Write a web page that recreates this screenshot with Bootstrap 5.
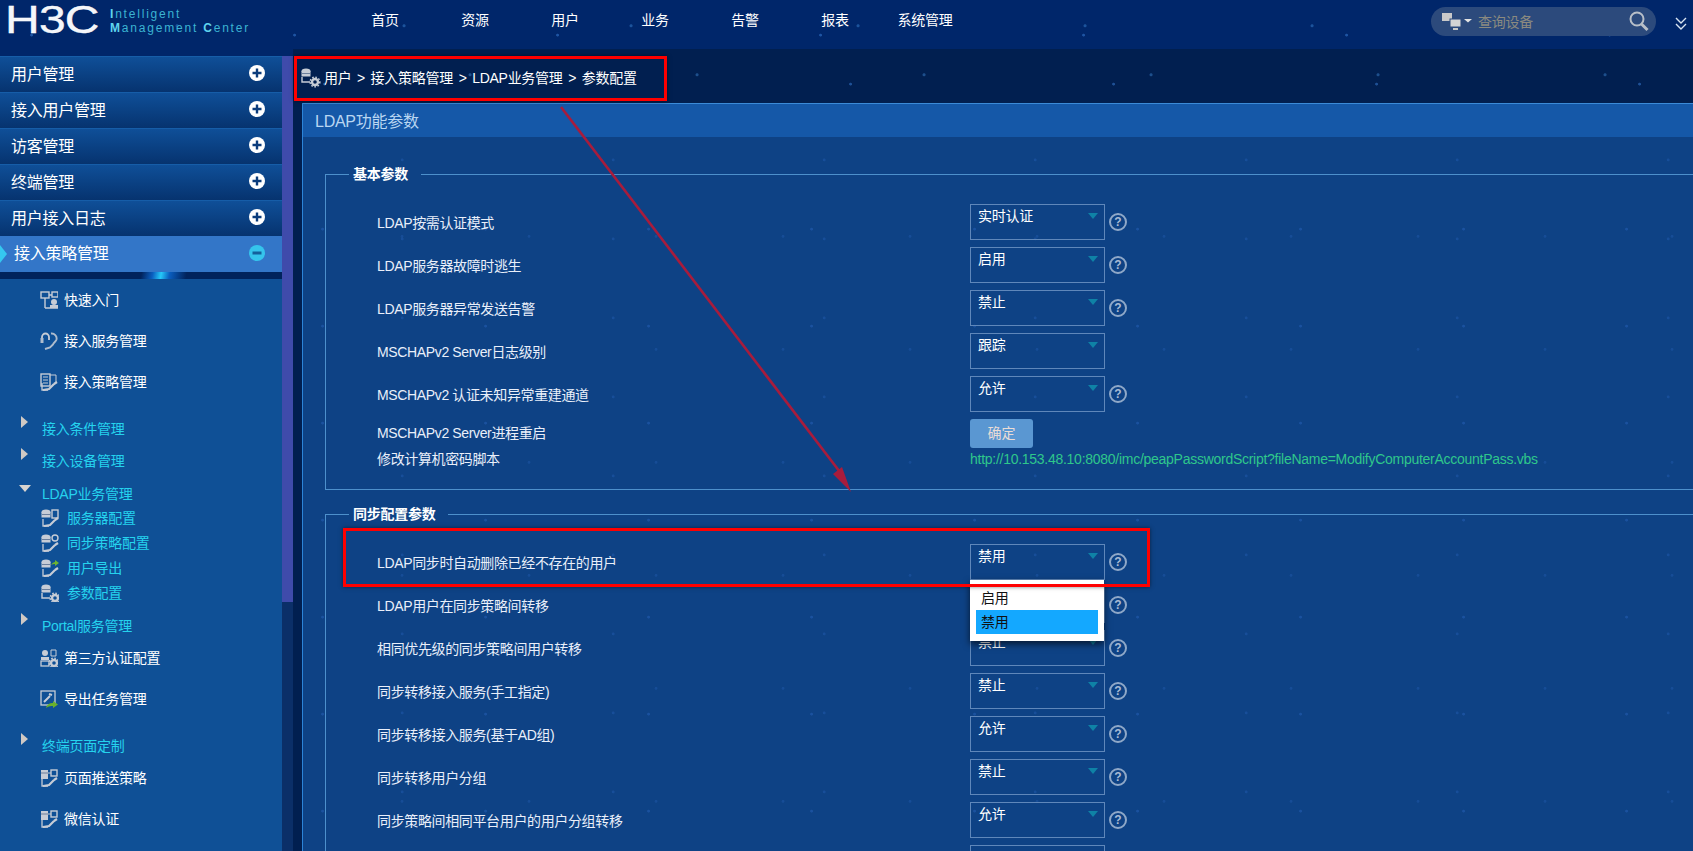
<!DOCTYPE html>
<html lang="zh">
<head>
<meta charset="utf-8">
<title>H3C IMC</title>
<link href="https://cdn.jsdelivr.net/npm/bootstrap@5.3.0/dist/css/bootstrap.min.css" rel="stylesheet">
<style>
html,body{height:851px;overflow:hidden}
body{position:relative;width:1693px;background:#011f50;color:#fff;font-family:"Liberation Sans","Noto Sans CJK SC",sans-serif;font-size:14px;line-height:20px;letter-spacing:-.27px}
.stars{background-image:
 radial-gradient(circle at 12% 30%,rgba(60,130,220,.5) 0 1px,transparent 1.8px),
 radial-gradient(circle at 47% 72%,rgba(60,130,220,.35) 0 1px,transparent 1.8px),
 radial-gradient(circle at 78% 18%,rgba(70,150,230,.4) 0 1px,transparent 2px),
 radial-gradient(circle at 30% 85%,rgba(70,150,230,.3) 0 1px,transparent 1.8px);
 background-size:263px 117px,311px 89px,227px 143px,333px 103px}
.faint{background-image:
 radial-gradient(circle at 12% 30%,rgba(40,100,190,.45) 0 1px,transparent 1.8px),
 radial-gradient(circle at 47% 72%,rgba(40,100,190,.35) 0 1px,transparent 1.8px),
 radial-gradient(circle at 78% 18%,rgba(40,100,190,.3) 0 1px,transparent 1.8px);
 background-size:163px 97px,211px 79px,127px 113px}
.hdr{height:49px;background-color:#00266a}
.brand{width:340px;flex:none}
.h3c{width:102px;padding:7px 0 0 5px;flex:none;height:49px}
.h3c span{display:block;font-size:32px;line-height:27px;font-weight:400;letter-spacing:-.5px;color:#f4f6fa;transform:scale(1.5,1.2);transform-origin:left center;-webkit-text-stroke:.3px #fff}
.imc{margin-left:8px;padding-top:7px;color:#3bb4d2;font-size:12px;line-height:14px;letter-spacing:1.8px;white-space:nowrap}
.imc b{color:#5fd4ee}
.topnav a{display:block;width:90px;text-align:center;color:#fff;text-decoration:none;line-height:40px;font-size:14px}
.searchbox{width:225px;height:29px;margin-top:7px;margin-left:auto;background:#2c4a7c;border-radius:15px;padding:0 7px 0 11px;color:#8b8a80;font-size:14px}
.searchbox span{margin-left:4px}
.more{width:37px;flex:none;padding:12px 0 0 19px}
.leftcol{width:293px;flex:none;height:802px;background-color:#00266a;padding-top:7px}
.leftin{width:282px;height:795px;flex:none;background:#0f5096;overflow:hidden}
.track{width:11px;height:795px;background:#0b2f68;flex:none}
.thumb{height:546px;background:#3f4bab}
.topitem{height:36px;padding-left:11px;font-size:16px;line-height:34px;background:linear-gradient(#0f4f98,#06336f);border-top:1px solid #165da8;color:#fff}
.topitem svg{margin-right:16px;margin-top:-3px}
.topitem.on{background:#3376c8;padding-left:0;border:0;line-height:36px;position:relative}
.notch{width:0;height:0;border-left:7px solid #35c8f0;border-top:9px solid transparent;border-bottom:9px solid transparent;margin-right:7px}
.streak{height:7px;background:linear-gradient(100deg,#01235c 50%,#0a5ec0 54%,#25c8f8 57%,#0a5ec0 60%,#01235c 66%)}
.leaf{height:41px;padding-left:40px;color:#fff;gap:6px}
.grp{height:22px;padding-left:19px;color:#25d3ee}
.grp .txt{margin-left:14px}
.grp.open .txt{margin-left:11px}
.sub{height:25px;padding-left:41px;color:#25d3ee;gap:8px}
.tri{width:0;height:0;border-left:7px solid #cfc9c4;border-top:6px solid transparent;border-bottom:6px solid transparent;margin-left:2px;margin-top:-15px}
.tridn{width:0;height:0;border-top:7px solid #d8d4d0;border-left:6px solid transparent;border-right:6px solid transparent;margin-top:-12px}
.gap16{margin-top:16px}.gap10{margin-top:10px}.gap11{margin-top:11px}
.rightcol{width:1400px;height:802px;overflow:hidden}
.crumb{height:54px;padding:4px 0 0 8px;gap:3px}
.crumb em{font-style:normal;margin:0 2px}
.paneltitle{height:34px;background:#1558a8;border-top:1px solid #3b8bd8;color:#b9d6f2;font-size:16px;line-height:35px;padding-left:12px}
.panel{margin-left:9px;background-color:#0e4285;border-left:1px solid #2c84d8;height:748px}
.panelin{padding:27px 0 0 22px;margin-right:-12px}
.fs{border:1px solid #4d90cc;padding:17px 0 21px;margin:0;min-width:0}
.fs legend{float:none;width:auto;font-size:14px;font-weight:700;line-height:20px;margin:0 0 0 23px;padding:0 13px 0 4px;color:#fff}
.fs+.fs{margin-top:14px}
.fsrow{height:43px;padding-top:3px;padding-left:51px}
.lbl{width:593px;height:36px;flex:none;color:#e9effa;padding-top:2px;letter-spacing:-.36px}
.sel{position:relative;width:135px;height:36px;flex:none;border:1px solid #5f87ba;padding:0 0 0 7px;line-height:22px;color:#fff}
.sel::after{content:"";position:absolute;right:6px;top:8px;border-top:6px solid #0f82a6;border-left:5.5px solid transparent;border-right:5.5px solid transparent}
.qm{width:18px;height:18px;margin:9px 0 0 4px;border:2px solid #8fa8c8;border-radius:50%;color:#a9bbd4;font-size:12px;font-weight:700;line-height:14px;text-align:center;flex:none;letter-spacing:0}
.btnrow{height:34px;padding-top:3px}
.btnrow .lbl{height:27px;padding-top:0}
.okbtn{width:63px;height:29px;padding:0;border:0;border-radius:3px;background:#5a97d2;color:#e9dcd6;font-size:14px;line-height:29px}
.okbtn:hover{background:#5a97d2;color:#e9dcd6}
.lnkrow{height:18px;padding-left:51px}
.lnkrow .lbl{height:18px;padding-top:0}
.lnk{color:#2ec78b;text-decoration:none;white-space:nowrap}
.opts{position:absolute;left:-1px;top:35px;width:134px;height:61px;background:#fff;box-shadow:0 3px 7px rgba(0,0,0,.65);z-index:4;padding:6px;color:#111;list-style:none;margin:0;line-height:24px}
.opts li{height:24px;padding-left:5px}
.opts li.act{background:#14a8ff}
.redbox{position:absolute;border:3px solid #f00;box-shadow:0 0 4px rgba(0,0,0,.5);z-index:6;pointer-events:none}
.rb1{left:294px;top:56px;width:373px;height:45px}
.rb2{left:343px;top:528px;width:807px;height:59px}
.arrow{position:absolute;left:0;top:0;z-index:5;pointer-events:none}
</style>
</head>
<body>
<svg width="0" height="0" class="position-absolute">
<defs>
<g id="stack"><ellipse cx="5" cy="3" rx="4.500" ry="2.500" fill="#c6ccd6"/><rect x="0.500" y="3" width="9" height="5.500" fill="#c6ccd6"/><path d="M1 5.500h8" stroke="#6b7f9c"/></g>
<g id="wrench"><path d="M3 17l6-1 5-5M14 11l3-2" fill="none" stroke="#c6ccd6" stroke-width="2.200"/><path d="M2 10v7h6" fill="none" stroke="#c6ccd6" stroke-width="1.300"/></g>
<g id="gear"><circle cx="14" cy="14" r="3" fill="none" stroke="#c6ccd6" stroke-width="2.400"/><circle cx="14" cy="14" r="4.800" fill="none" stroke="#c6ccd6" stroke-dasharray="1.600 1.600" stroke-width="1.600"/></g>
<g id="i-quick"><rect x="1" y="1" width="8" height="6" fill="none" stroke="#c6ccd6" stroke-width="1.400"/><rect x="12" y="1" width="6" height="5" fill="none" stroke="#c6ccd6" stroke-width="1.400"/><path d="M9 4h3M5 7v10M5 17h13" fill="none" stroke="#c6ccd6" stroke-width="1.400"/><circle cx="14" cy="11" r="3" fill="#c6ccd6"/><rect x="10" y="14" width="8" height="3" fill="#c6ccd6"/></g>
<g id="i-svc"><path d="M2 9V5a3.500 3.500 0 0 1 7 0v3" fill="none" stroke="#c6ccd6" stroke-width="1.800"/><rect x="0.500" y="6" width="3" height="5" fill="#aebccd"/><path d="M11 1.500a5 5 0 0 1 5.500 6c-.7 2.500-3 3-3.500 5l-3 3-5 1.500" fill="none" stroke="#aebccd" stroke-width="1.900"/></g>
<g id="i-pol"><rect x="1" y="1" width="9" height="12" fill="none" stroke="#c6ccd6" stroke-width="1.400"/><path d="M3 4h5M3 7h5M3 10h5M10 2h6v7" fill="none" stroke="#c6ccd6"/><use href="#wrench"/></g>
<g id="i-srv"><use href="#stack"/><rect x="11" y="1" width="6" height="8" fill="none" stroke="#c6ccd6" stroke-width="1.400"/><use href="#wrench"/></g>
<g id="i-syn"><use href="#stack"/><circle cx="14" cy="4" r="3" fill="none" stroke="#c6ccd6" stroke-width="1.400"/><use href="#wrench"/></g>
<g id="i-exp"><use href="#stack"/><path d="M10 6c1-2 3-3 4-3V1l4 3-4 3V5c-1 0-3 0-4 1z" fill="#6fb52f"/><use href="#wrench"/></g>
<g id="i-par"><use href="#stack"/><path d="M1 9v5h8" fill="none" stroke="#c6ccd6" stroke-width="1.400"/><use href="#gear"/></g>
<g id="i-3rd"><circle cx="5" cy="4" r="3" fill="#c6ccd6"/><rect x="1" y="8" width="8" height="3" fill="#c6ccd6"/><rect x="1" y="12" width="8" height="5" fill="none" stroke="#c6ccd6" stroke-width="1.300"/><path d="M11 1h5v6h-5z" fill="none" stroke="#c6ccd6"/><use href="#gear"/></g>
<g id="i-tsk"><rect x="1" y="1" width="14" height="14" fill="none" stroke="#c6ccd6" stroke-width="1.300"/><path d="M4 12l6-6M9 4l3 1" stroke="#c6ccd6" stroke-width="2"/><path d="M6 18c1-4 4-5 7-5v-2l5 3.500-5 3.500v-2c-2 0-4 0-7 2z" fill="#69b02c"/></g>
<g id="i-psh"><rect x="1" y="1" width="7" height="9" fill="#c6ccd6"/><path d="M1 4h7" stroke="#6b7f9c"/><rect x="11" y="1" width="6" height="6" fill="none" stroke="#c6ccd6" stroke-width="1.400"/><path d="M8 4h3" stroke="#c6ccd6"/><use href="#wrench"/></g>
</defs>
</svg>

<header class="hdr stars d-flex">
  <div class="brand d-flex">
    <div class="h3c"><span>H3C</span></div>
    <div class="imc"><b>I</b>ntelligent<br><b>M</b>anagement <b>C</b>enter</div>
  </div>
  <nav class="topnav d-flex">
    <a href="#">首页</a><a href="#">资源</a><a href="#">用户</a><a href="#">业务</a><a href="#">告警</a><a href="#">报表</a><a href="#">系统管理</a>
  </nav>
  <div class="searchbox d-flex align-items-center">
    <svg width="32" height="20" viewBox="0 0 32 20"><rect x="0" y="1" width="10" height="8" fill="#c9c9c9"/><rect x="8" y="7" width="11" height="8" fill="#d4d4d4" stroke="#2c4a7c"/><path d="M11 16h5v2h-5z" fill="#c9c9c9"/><path d="M22 7h8l-4 3.500z" fill="#e4e4e4"/></svg>
    <span>查询设备</span>
    <svg class="ms-auto" width="20" height="21" viewBox="0 0 20 21"><circle cx="8" cy="8" r="6.500" fill="none" stroke="#b8bfc8" stroke-width="2"/><path d="M12.500 13l6 6" stroke="#b8bfc8" stroke-width="3"/></svg>
  </div>
  <div class="more"><svg width="12" height="13" viewBox="0 0 12 13"><path d="M1 1l5 5 5-5M1 7l5 5 5-5" fill="none" stroke="#d8e4f2" stroke-width="1.400"/></svg></div>
</header>

<div class="d-flex">
  <aside class="leftcol stars d-flex">
    <div class="leftin">
      <div class="topitem d-flex align-items-center justify-content-between">用户管理<svg width="18" height="18" viewBox="0 0 18 18"><circle cx="9" cy="9" r="8" fill="#fff"/><path d="M9 4.500v9M4.500 9h9" stroke="#0b3c7c" stroke-width="2.400"/></svg></div>
      <div class="topitem d-flex align-items-center justify-content-between">接入用户管理<svg width="18" height="18" viewBox="0 0 18 18"><circle cx="9" cy="9" r="8" fill="#fff"/><path d="M9 4.500v9M4.500 9h9" stroke="#0b3c7c" stroke-width="2.400"/></svg></div>
      <div class="topitem d-flex align-items-center justify-content-between">访客管理<svg width="18" height="18" viewBox="0 0 18 18"><circle cx="9" cy="9" r="8" fill="#fff"/><path d="M9 4.500v9M4.500 9h9" stroke="#0b3c7c" stroke-width="2.400"/></svg></div>
      <div class="topitem d-flex align-items-center justify-content-between">终端管理<svg width="18" height="18" viewBox="0 0 18 18"><circle cx="9" cy="9" r="8" fill="#fff"/><path d="M9 4.500v9M4.500 9h9" stroke="#0b3c7c" stroke-width="2.400"/></svg></div>
      <div class="topitem d-flex align-items-center justify-content-between">用户接入日志<svg width="18" height="18" viewBox="0 0 18 18"><circle cx="9" cy="9" r="8" fill="#fff"/><path d="M9 4.500v9M4.500 9h9" stroke="#0b3c7c" stroke-width="2.400"/></svg></div>
      <div class="topitem on d-flex align-items-center"><i class="notch"></i>接入策略管理<svg class="ms-auto" width="18" height="18" viewBox="0 0 18 18"><circle cx="9" cy="9" r="8" fill="#35c4ec"/><path d="M4.500 9h9" stroke="#14609c" stroke-width="3"/></svg></div>
      <div class="streak"></div>

      <div class="leaf d-flex align-items-center"><svg width="18" height="18" viewBox="0 0 18 18"><use href="#i-quick"/></svg>快速入门</div>
      <div class="leaf d-flex align-items-center"><svg width="18" height="18" viewBox="0 0 18 18"><use href="#i-svc"/></svg>接入服务管理</div>
      <div class="leaf d-flex align-items-center"><svg width="18" height="18" viewBox="0 0 18 18"><use href="#i-pol"/></svg>接入策略管理</div>

      <div class="grp gap16 d-flex align-items-center"><i class="tri"></i><span class="txt">接入条件管理</span></div>
      <div class="grp gap10 d-flex align-items-center"><i class="tri"></i><span class="txt">接入设备管理</span></div>
      <div class="grp open gap11 d-flex align-items-center"><i class="tridn"></i><span class="txt">LDAP业务管理</span></div>
      <div class="sub d-flex align-items-center"><svg width="18" height="18" viewBox="0 0 18 18"><use href="#i-srv"/></svg>服务器配置</div>
      <div class="sub d-flex align-items-center"><svg width="18" height="18" viewBox="0 0 18 18"><use href="#i-syn"/></svg>同步策略配置</div>
      <div class="sub d-flex align-items-center"><svg width="18" height="18" viewBox="0 0 18 18"><use href="#i-exp"/></svg>用户导出</div>
      <div class="sub d-flex align-items-center"><svg width="18" height="18" viewBox="0 0 18 18"><use href="#i-par"/></svg>参数配置</div>
      <div class="grp gap10 d-flex align-items-center"><i class="tri"></i><span class="txt">Portal服务管理</span></div>
      <div class="leaf d-flex align-items-center"><svg width="18" height="18" viewBox="0 0 18 18"><use href="#i-3rd"/></svg>第三方认证配置</div>
      <div class="leaf d-flex align-items-center"><svg width="18" height="18" viewBox="0 0 18 18"><use href="#i-tsk"/></svg>导出任务管理</div>
      <div class="grp gap16 d-flex align-items-center"><i class="tri"></i><span class="txt">终端页面定制</span></div>
      <div class="leaf d-flex align-items-center"><svg width="18" height="18" viewBox="0 0 18 18"><use href="#i-psh"/></svg>页面推送策略</div>
      <div class="leaf d-flex align-items-center"><svg width="18" height="18" viewBox="0 0 18 18"><use href="#i-psh"/></svg>微信认证</div>
    </div>
    <div class="track stars"><div class="thumb"></div></div>
  </aside>

  <main class="rightcol stars">
    <div class="crumb d-flex align-items-center">
      <svg width="20" height="20" viewBox="0 0 20 20"><use href="#i-par"/></svg>
      <span>用户 <em>&gt;</em> 接入策略管理 <em>&gt;</em> LDAP业务管理 <em>&gt;</em> 参数配置</span>
    </div>
    <section class="panel faint">
      <div class="paneltitle">LDAP功能参数</div>
      <div class="panelin">
        <fieldset class="fs">
          <legend>基本参数</legend>
          <div class="fsrow d-flex"><div class="lbl d-flex align-items-center">LDAP按需认证模式</div><div class="sel">实时认证</div><div class="qm">?</div></div>
          <div class="fsrow d-flex"><div class="lbl d-flex align-items-center">LDAP服务器故障时逃生</div><div class="sel">启用</div><div class="qm">?</div></div>
          <div class="fsrow d-flex"><div class="lbl d-flex align-items-center">LDAP服务器异常发送告警</div><div class="sel">禁止</div><div class="qm">?</div></div>
          <div class="fsrow d-flex"><div class="lbl d-flex align-items-center">MSCHAPv2 Server日志级别</div><div class="sel">跟踪</div></div>
          <div class="fsrow d-flex"><div class="lbl d-flex align-items-center">MSCHAPv2 认证未知异常重建通道</div><div class="sel">允许</div><div class="qm">?</div></div>
          <div class="fsrow btnrow d-flex"><div class="lbl d-flex align-items-center">MSCHAPv2 Server进程重启</div><button type="button" class="btn okbtn">确定</button></div>
          <div class="lnkrow d-flex align-items-center"><div class="lbl d-flex align-items-center">修改计算机密码脚本</div><a class="lnk" href="#">http://10.153.48.10:8080/imc/peapPasswordScript?fileName=ModifyComputerAccountPass.vbs</a></div>
        </fieldset>
        <fieldset class="fs">
          <legend>同步配置参数</legend>
          <div class="fsrow d-flex"><div class="lbl d-flex align-items-center">LDAP同步时自动删除已经不存在的用户</div><div class="sel">禁用
            <ul class="opts"><li>启用</li><li class="act">禁用</li></ul></div><div class="qm">?</div></div>
          <div class="fsrow d-flex"><div class="lbl d-flex align-items-center">LDAP用户在同步策略间转移</div><div class="sel">禁止</div><div class="qm">?</div></div>
          <div class="fsrow d-flex"><div class="lbl d-flex align-items-center">相同优先级的同步策略间用户转移</div><div class="sel">禁止</div><div class="qm">?</div></div>
          <div class="fsrow d-flex"><div class="lbl d-flex align-items-center">同步转移接入服务(手工指定)</div><div class="sel">禁止</div><div class="qm">?</div></div>
          <div class="fsrow d-flex"><div class="lbl d-flex align-items-center">同步转移接入服务(基于AD组)</div><div class="sel">允许</div><div class="qm">?</div></div>
          <div class="fsrow d-flex"><div class="lbl d-flex align-items-center">同步转移用户分组</div><div class="sel">禁止</div><div class="qm">?</div></div>
          <div class="fsrow d-flex"><div class="lbl d-flex align-items-center">同步策略间相同平台用户的用户分组转移</div><div class="sel">允许</div><div class="qm">?</div></div>
          <div class="fsrow d-flex"><div class="lbl"></div><div class="sel"></div></div>
        </fieldset>
      </div>
    </section>
  </main>
</div>

<div class="redbox rb1"></div>
<div class="redbox rb2"></div>
<svg class="arrow" width="1693" height="851" viewBox="0 0 1693 851">
  <path d="M561 107L843 476" stroke="#a81c3c" stroke-width="2.600"/>
  <path d="M851 492L833 474L842 467z" fill="#a81c3c"/>
</svg>
<script src="https://cdn.jsdelivr.net/npm/bootstrap@5.3.0/dist/js/bootstrap.bundle.min.js"></script>
</body>
</html>
